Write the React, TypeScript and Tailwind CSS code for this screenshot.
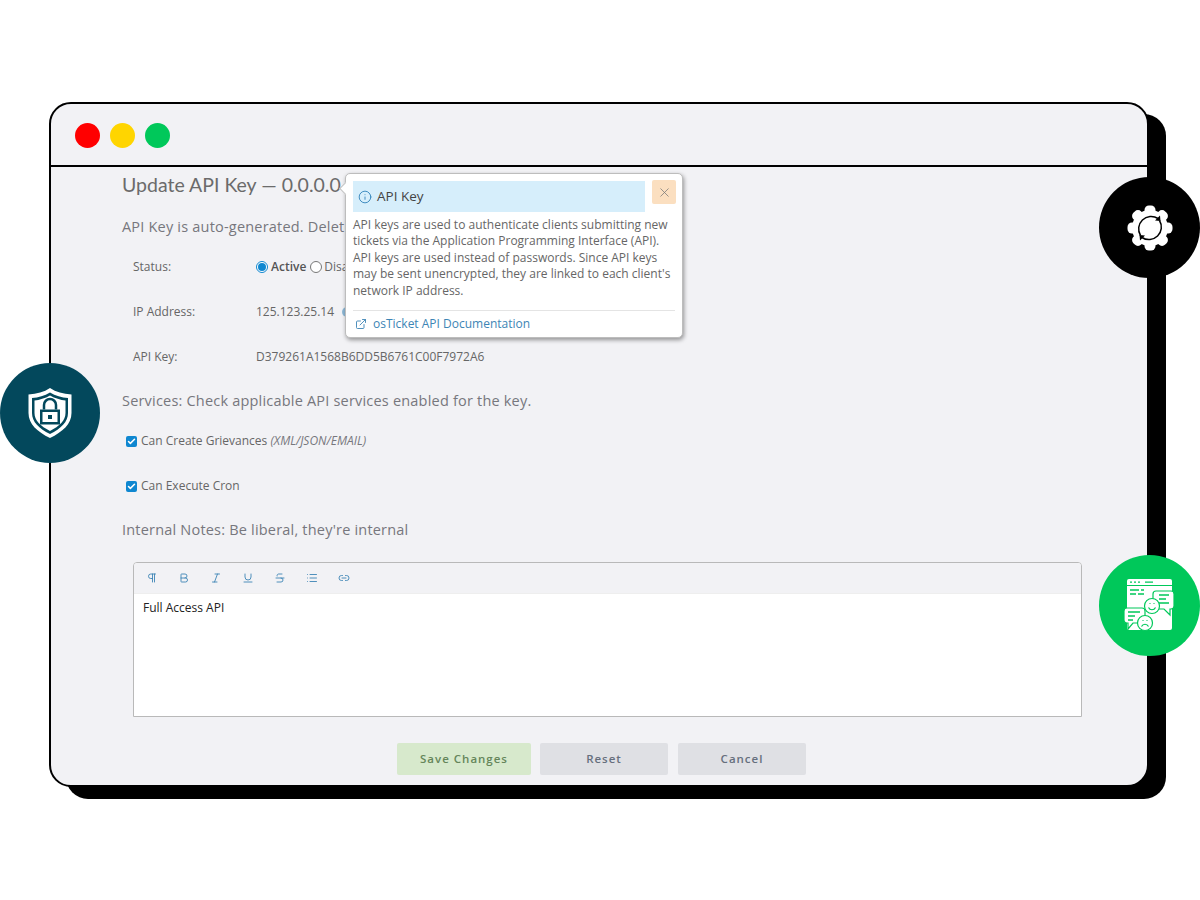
import { Bold, Check, ExternalLink, Info, Italic, Link2, List, Pilcrow, Strikethrough, Underline, X } from 'lucide-react';

const toolbar = [Pilcrow, Bold, Italic, Underline, Strikethrough, List, Link2];

const GearIcon = () => (
  <svg width="48" height="48" viewBox="0 0 48 48">
    <g fill="#fff">
      <circle cx="24" cy="24" r="18" />
      {[0, 45, 90, 135, 180, 225, 270, 315].map((deg) => (
        <rect key={deg} x="18.5" y="1.5" width="11" height="10" rx="4.5" transform={`rotate(${deg} 24 24)`} />
      ))}
    </g>
    <g fill="none" stroke="#000" strokeWidth="1.5">
      <path d="M14.5 31.5A12.5 12.5 0 0 1 32 14.5" />
      <path d="M33.5 16.5A12.5 12.5 0 0 1 16 33.5" />
    </g>
    <path d="M29 16.5l5.5.5-.5-5.5zM19 31.5l-5.5-.5.5 5.5z" fill="#000" />
  </svg>
);

const ShieldIcon = () => (
  <svg width="46" height="52" viewBox="0 0 46 52">
    <path d="M23 1c6 4 13 6 21.500 6.500V26c0 11-9 19-21.500 25C10.500 45 1.500 37 1.500 26V7.500C10 7 17 5 23 1z" fill="#fff" />
    <path d="M23 5.500c5.500 3.300 11.500 5 18 5.500v15c0 9-7 15.500-18 21C12 41.500 5 35 5 26V11c6.500-.5 12.500-2.200 18-5.500z" fill="#03485c" />
    <path d="M23 8.500c5 2.800 10.500 4.500 15.500 5V26c0 7.500-6 13-15.500 18C13.500 39 7.500 33.500 7.500 26V13.500c5-.5 10.500-2.200 15.500-5z" fill="#fff" />
    <path d="M13 22.500h20v15H13z" fill="#03485c" />
    <path d="M15.500 25h15v10h-15z" fill="#fff" />
    <path d="M17 22.500V18a6 6 0 0 1 12 0v4.500" fill="none" stroke="#03485c" strokeWidth="2.500" />
    <path d="M21 28h4v4h-4z" fill="#03485c" />
  </svg>
);

const FeedbackIcon = () => (
  <svg width="52" height="54" viewBox="0 0 52 54">
    <rect x="3" y="0" width="45" height="51" rx="2" fill="#fff" />
    <path d="M3 6.500h45" stroke="#00c85a" strokeWidth="1.200" />
    <path d="M6 3.200h2M10 3.200h2M14 3.200h2M21 3.200h8M6 11h9M17 11h3M6 15h6M14 15h6" stroke="#00c85a" strokeWidth="1.300" />
    <path d="M32 12h15a3 3 0 0 1 3 3v12a3 3 0 0 1-3 3h-1v6l-6-6h-8a3 3 0 0 1-3-3V15a3 3 0 0 1 3-3z" fill="#fff" stroke="#00c85a" strokeWidth="1.200" />
    <path d="M35 16h10M35 20h7M35 24h10" stroke="#00c85a" strokeWidth="1.300" />
    <circle cx="28" cy="27" r="7.500" fill="#fff" stroke="#00c85a" strokeWidth="1.200" />
    <path d="M24.500 28.500c1.500 3 5.500 3 7 0M25.500 24.500h1M29.500 24.500h1" fill="none" stroke="#00c85a" strokeWidth="1.200" />
    <path d="M3 29h15a3 3 0 0 1 3 3v9a3 3 0 0 1-3 3H9l-5 6v-6H3a3 3 0 0 1-3-3v-9a3 3 0 0 1 3-3z" fill="#fff" stroke="#00c85a" strokeWidth="1.200" />
    <path d="M4 33h12M4 37h7M4 41h5" stroke="#00c85a" strokeWidth="1.300" />
    <circle cx="21" cy="44" r="7.500" fill="#fff" stroke="#00c85a" strokeWidth="1.200" />
    <path d="M17.500 47.500c1.500-3 5.500-3 7 0M18.500 41.500h1M22.500 41.500h1" fill="none" stroke="#00c85a" strokeWidth="1.200" />
  </svg>
);

const CheckRow = ({ children, className }: { children: React.ReactNode; className: string }) => (
  <div className={`flex items-center gap-[4px] pl-[4px] text-[12px] text-[#666] ${className}`}>
    <span className="flex h-[11px] w-[11px] items-center justify-center rounded-[2px] bg-[#0f87d0]">
      <Check size={9} strokeWidth={4} color="#fff" />
    </span>
    <span>{children}</span>
  </div>
);

export default function App() {
  return (
    <div className="h-[900px] w-[1200px] overflow-hidden bg-white pl-[49px] pt-[102px] font-['Open_Sans',sans-serif]">
      <div className="relative h-[685px] w-[1100px] rounded-[22px] border-2 border-black bg-[#f2f2f5] shadow-[17px_12px_0_0_#000]">
        {/* Title bar */}
        <div className="flex h-[63px] items-center gap-[10px] border-b-2 border-black pl-[24px] pt-[1px]">
          <span className="h-[25px] w-[25px] rounded-full bg-[#ff0000]" />
          <span className="h-[25px] w-[25px] rounded-full bg-[#ffd500]" />
          <span className="h-[25px] w-[25px] rounded-full bg-[#00c85a]" />
        </div>

        {/* Form */}
        <div className="pl-[71px] pt-[6px]">
          <h1 className="h-[24px] font-['Lato',sans-serif] text-[19.500px] leading-[24px] text-[#6b6b6b]">Update API Key — 0.0.0.0</h1>
          <p className="mt-[20px] h-[20px] text-[14.500px] leading-[20px] tracking-[0.2px] text-[#77777d]">
            API Key is auto-generated. Delete and re-add to change
          </p>
          <div className="mt-[20px] flex h-[20px] items-center pl-[11px] text-[12px] text-[#666]">
            <span className="w-[123px]">Status:</span>
            <span className="mr-[3px] flex h-[12px] w-[12px] items-center justify-center rounded-full border border-[#0f87d0] bg-white">
              <span className="h-[8px] w-[8px] rounded-full bg-[#0f87d0]" />
            </span>
            <span className="font-semibold text-[#555]">Active</span>
            <span className="ml-[4px] mr-[2px] h-[12px] w-[12px] rounded-full border border-[#777] bg-white" />
            <span>Disabled</span>
          </div>
          <div className="mt-[25px] flex h-[20px] items-center pl-[11px] text-[12px] text-[#666]">
            <span className="w-[123px]">IP Address:</span>
            <span>125.123.25.14</span>
            <span className="ml-[8px] h-[10px] w-[10px] rounded-full bg-[#8db8d6]" />
          </div>
          <div className="mt-[25px] flex h-[20px] items-center pl-[11px] text-[12px] text-[#666]">
            <span className="w-[123px]">API Key:</span>
            <span>D379261A1568B6DD5B6761C00F7972A6</span>
          </div>
          <p className="mt-[24px] h-[20px] text-[14.500px] leading-[20px] tracking-[0.2px] text-[#77777d]">
            Services: Check applicable API services enabled for the key.
          </p>
          <CheckRow className="mt-[20px] h-[20px]">
            Can Create Grievances <em className="text-[#77777d]">(XML/JSON/EMAIL)</em>
          </CheckRow>
          <CheckRow className="mt-[25px] h-[20px]">Can Execute Cron</CheckRow>
          <p className="mt-[24px] h-[20px] text-[14.500px] leading-[20px] tracking-[0.2px] text-[#77777d]">
            Internal Notes: Be liberal, they're internal
          </p>

          {/* Editor */}
          <div className="ml-[11px] mt-[22px] h-[155px] w-[949px] overflow-hidden rounded-t-[4px] border border-[#b9b9b9] bg-white">
            <div className="flex h-[31px] items-center gap-[16px] border-b border-[#eee] bg-[#f2f2f5] pl-[10px] text-[#3d85b5]">
              {toolbar.map((Icon, i) => (
                <Icon key={i} size={16} strokeWidth={1.800} className="p-[2px]" />
              ))}
            </div>
            <p className="pl-[9px] pt-[5px] text-[12px] leading-[18px] text-[#222]">Full Access API</p>
          </div>

          {/* Actions */}
          <div className="ml-[275px] mt-[26px] flex text-[11.500px] font-semibold tracking-[1px]">
            <button className="h-[32px] w-[134px] rounded-[2px] bg-[#d7e9cc] text-[#65855a]">Save Changes</button>
            <button className="ml-[9px] h-[32px] w-[128px] rounded-[2px] bg-[#dfe0e4] text-[#666f7d]">Reset</button>
            <button className="ml-[10px] h-[32px] w-[128px] rounded-[2px] bg-[#dfe0e4] text-[#666f7d]">Cancel</button>
          </div>
        </div>

        {/* Tooltip */}
        <div className="absolute left-[294px] top-[69px] h-[165px] w-[338px] rounded-[5px] border border-[#bdbdbd] bg-white p-[7px] shadow-[1px_2px_4px_rgba(0,0,0,0.4)]">
          <span className="absolute left-[-5px] top-[10px] h-[9px] w-[9px] rotate-45 border-b border-l border-[#bdbdbd] bg-white" />
          <div className="flex items-start justify-between">
            <div className="flex h-[31px] w-[292px] items-center gap-[5px] bg-[#d6eefb] pl-[5px] text-[13.500px] text-[#444]">
              <Info size={14} color="#2b7fb8" strokeWidth={1.500} />
              API Key
            </div>
            <span className="mr-[-1px] mt-[-1px] flex h-[24px] w-[24px] items-center justify-center rounded-[2px] bg-[#fbdfc0]">
              <X size={15} color="#777" strokeWidth={1.200} />
            </span>
          </div>
          <p className="mt-[5px] h-[85px] w-[322px] text-[12px] leading-[16.400px] text-[#666]">
            API keys are used to authenticate clients submitting new tickets via the Application Programming Interface (API). API keys are used instead of passwords. Since API keys may be sent unencrypted, they are linked to each client's network IP address.
          </p>
          <div className="mt-[8px] flex h-[26px] items-center gap-[6px] border-t border-[#e4e4e4] pl-[2px] pt-[1px] text-[12px] text-[#3d85b5]">
            <ExternalLink size={12} strokeWidth={1.800} />
            osTicket API Documentation
          </div>
        </div>

        {/* Floating badges */}
        <div className="absolute left-[1048px] top-[73px] flex h-[101px] w-[101px] items-center justify-center rounded-full bg-black">
          <GearIcon />
        </div>
        <div className="absolute left-[-51px] top-[259px] flex h-[100px] w-[100px] items-center justify-center rounded-full bg-[#03485c]">
          <ShieldIcon />
        </div>
        <div className="absolute left-[1048px] top-[451px] flex h-[101px] w-[101px] items-center justify-center rounded-full bg-[#00c85a]">
          <FeedbackIcon />
        </div>
      </div>
    </div>
  );
}
